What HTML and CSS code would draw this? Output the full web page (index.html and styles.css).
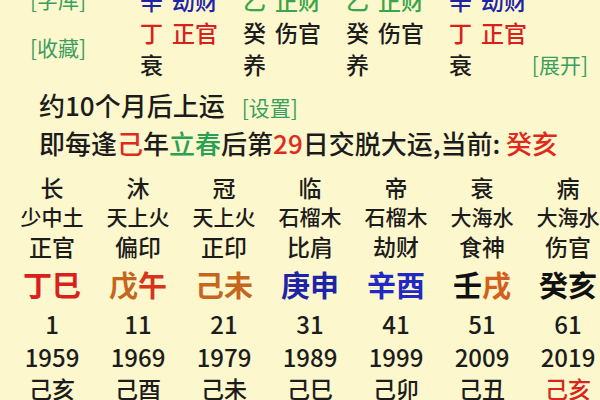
FILE: index.html
```html
<!DOCTYPE html>
<html lang="zh">
<head>
<meta charset="utf-8">
<link rel="stylesheet" href="styles.css">
</head>
<body>
<div class="page">
  <section class="top">
    <div class="labels">
      <span class="link">[字库]</span>
      <span class="link">[收藏]</span>
    </div>
    <div class="pillars">
      <div class="cell metal"><span>辛</span><span>劫财</span></div>
      <div class="cell wood"><span>乙</span><span>正财</span></div>
      <div class="cell wood"><span>乙</span><span>正财</span></div>
      <div class="cell metal"><span>辛</span><span>劫财</span></div>
      <div class="cell fire"><span>丁</span><span>正官</span></div>
      <div class="cell"><span>癸</span><span>伤官</span></div>
      <div class="cell"><span>癸</span><span>伤官</span></div>
      <div class="cell fire"><span>丁</span><span>正官</span></div>
      <div class="cell"><span>衰</span></div>
      <div class="cell"><span>养</span></div>
      <div class="cell"><span>养</span></div>
      <div class="cell"><span>衰</span></div>
    </div>
    <span class="link expand">[展开]</span>
  </section>

  <section class="tip">
    <div class="line">约10个月后上运<span class="link setting">[设置]</span></div>
    <div class="line">即每逢<span class="red">己</span>年<span class="green">立春</span>后第<span class="red">29</span>日交脱大运,当前: <span class="red">癸亥</span></div>
  </section>

  <section class="luck">
    <div class="h">长</div><div class="h">沐</div><div class="h">冠</div><div class="h">临</div><div class="h">帝</div><div class="h">衰</div><div class="h">病</div>
    <div class="n">少中土</div><div class="n">天上火</div><div class="n">天上火</div><div class="n">石榴木</div><div class="n">石榴木</div><div class="n">大海水</div><div class="n">大海水</div>
    <div class="s">正官</div><div class="s">偏印</div><div class="s">正印</div><div class="s">比肩</div><div class="s">劫财</div><div class="s">食神</div><div class="s">伤官</div>
    <div class="g"><span class="fire">丁巳</span></div>
    <div class="g"><span class="earth">戊</span><span class="fire2">午</span></div>
    <div class="g"><span class="earth">己未</span></div>
    <div class="g"><span class="metal">庚申</span></div>
    <div class="g"><span class="metal2">辛酉</span></div>
    <div class="g"><span>壬</span><span class="earth2">戌</span></div>
    <div class="g"><span>癸亥</span></div>
    <div class="a">1</div><div class="a">11</div><div class="a">21</div><div class="a">31</div><div class="a">41</div><div class="a">51</div><div class="a">61</div>
    <div class="y">1959</div><div class="y">1969</div><div class="y">1979</div><div class="y">1989</div><div class="y">1999</div><div class="y">2009</div><div class="y">2019</div>
    <div class="b">己亥</div><div class="b">己酉</div><div class="b">己未</div><div class="b">己巳</div><div class="b">己卯</div><div class="b">己丑</div><div class="b red">己亥</div>
  </section>
</div>
</body>
</html>
```

FILE: styles.css
```css
html, body {
  margin: 0;
  padding: 0;
  width: 600px;
  height: 400px;
  overflow: hidden;
  background: #fcf7cd;
}
body {
  font-family: "Noto Sans CJK SC", "Noto Sans", sans-serif;
  font-weight: 500;
  color: #1c1c1c;
}
.page {
  width: 600px;
  height: 400px;
  overflow: hidden;
}
.link {
  color: #3a9f5e;
  font-size: 21px;
  font-weight: 400;
}
.red { color: #df2a1e; }
.green { color: #2aa055; }
.fire { color: #d8201c; }
.fire2 { color: #d8341c; }
.wood { color: #3aa54a; }
.metal { color: #1e24a8; }
.metal2 { color: #2228c4; }
.earth { color: #c4661e; }
.earth2 { color: #d45e1c; }

.top {
  display: flex;
  margin-top: -16px;
  padding-right: 12px;
}
.labels {
  width: 110px;
  padding-left: 30px;
  display: flex;
  flex-direction: column;
  margin-top: -9px;
}
.labels .link {
  line-height: 48px;
}
.pillars {
  display: grid;
  grid-template-columns: repeat(3, 103px) auto;
  font-size: 23px;
  line-height: 32px;
}
.cell {
  display: flex;
  gap: 9px;
  white-space: nowrap;
}
.expand {
  margin-left: auto;
  align-self: flex-end;
  line-height: 32px;
}

.tip {
  margin-top: 7px;
  padding-left: 39px;
  font-size: 26px;
  white-space: nowrap;
}
.tip .line {
  line-height: 36px;
}
.setting {
  margin-left: 17px;
}

.luck {
  display: grid;
  grid-template-columns: repeat(7, 86px);
  margin-left: 9px;
  margin-top: 11px;
  text-align: center;
  white-space: nowrap;
}
.h { font-size: 23px; line-height: 30px; }
.n { font-size: 21px; line-height: 29px; }
.s { font-size: 23px; line-height: 30px; }
.g { font-size: 29px; line-height: 46px; font-weight: 700; color: #111; }
.a { font-size: 24px; line-height: 34px; }
.y { font-size: 24px; line-height: 32px; }
.b { font-size: 23px; line-height: 30px; }
.b.red { color: #d8261c; }
```
